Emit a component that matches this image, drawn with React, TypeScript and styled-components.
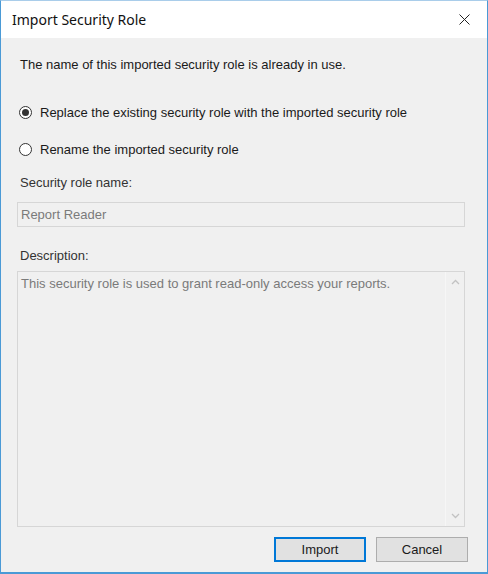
import styled, { createGlobalStyle } from 'styled-components';

const GlobalStyle = createGlobalStyle`
  html, body {
    margin: 0;
    padding: 0;
    background: #f0f0f0;
  }
  * {
    box-sizing: border-box;
  }
`;

const Window = styled.div`
  width: 488px;
  height: 574px;
  display: flex;
  flex-direction: column;
  border: 1px solid #4a9ad6;
  border-top-color: #a9cdea;
  border-bottom-width: 2px;
  background: #f0f0f0;
  font-family: 'Liberation Sans', Arial, sans-serif;
  font-size: 13px;
  color: #1a1a1a;
`;

const TitleBar = styled.div`
  height: 37px;
  flex-shrink: 0;
  display: flex;
  align-items: center;
  justify-content: space-between;
  background: #ffffff;
  padding-left: 11px;
`;

const Title = styled.span`
  font-family: 'Noto Sans', 'Open Sans', sans-serif;
  font-size: 14px;
  color: #111;
`;

const CloseButton = styled.button`
  width: 46px;
  height: 37px;
  border: none;
  background: transparent;
  display: flex;
  align-items: center;
  justify-content: center;
  padding: 0;
`;

const Body = styled.div`
  flex: 1;
  display: flex;
  flex-direction: column;
  padding: 0 22px 0 16px;
`;

const Text = styled.div<{ $top: number; $muted?: boolean }>`
  margin-top: ${(p) => p.$top}px;
  margin-left: 3px;
  line-height: 15px;
  color: ${(p) => (p.$muted ? '#333' : '#1a1a1a')};
`;

const RadioRow = styled.label<{ $top: number }>`
  margin-top: ${(p) => p.$top}px;
  display: flex;
  align-items: center;
  gap: 8px;
  height: 16px;
  padding-left: 2px;
`;

const RadioCircle = styled.span<{ $checked?: boolean }>`
  width: 13px;
  height: 13px;
  border-radius: 50%;
  border: 1px solid #333;
  background: #fff;
  display: flex;
  align-items: center;
  justify-content: center;

  &::after {
    content: '';
    width: 7px;
    height: 7px;
    border-radius: 50%;
    background: ${(p) => (p.$checked ? '#333' : 'transparent')};
  }
`;

const Field = styled.div<{ $top: number; $height: number }>`
  margin-top: ${(p) => p.$top}px;
  height: ${(p) => p.$height}px;
  border: 1px solid #d6d6d6;
  background: #f0f0f0;
  color: #7a7a7a;
  display: flex;
`;

const FieldText = styled.div`
  flex: 1;
  padding: 4px 3px;
  line-height: 15px;
`;

const ScrollBar = styled.div`
  width: 19px;
  display: flex;
  flex-direction: column;
  justify-content: space-between;
  align-items: center;
  padding: 7px 0;
  border-left: 1px solid #f6f6f6;
`;

const Footer = styled.div`
  margin-top: 10px;
  display: flex;
  justify-content: flex-end;
  gap: 10px;
  margin-right: -3px;
`;

const Button = styled.button<{ $primary?: boolean }>`
  width: 92px;
  height: 25px;
  background: #e1e1e1;
  border: ${(p) => (p.$primary ? '2px solid #0078d7' : '1px solid #adadad')};
  font-family: 'Liberation Sans', Arial, sans-serif;
  font-size: 13px;
  color: #1a1a1a;
  padding: 0;
`;

const Chevron = ({ up }: { up?: boolean }) => (
  <svg width="9" height="6" viewBox="0 0 9 6">
    <path
      d={up ? 'M1 5 L4.5 1.5 L8 5' : 'M1 1 L4.5 4.5 L8 1'}
      fill="none"
      stroke="#c2c2c2"
      strokeWidth="1.3"
    />
  </svg>
);

export default function App() {
  return (
    <>
      <GlobalStyle />
      <Window>
        <TitleBar>
          <Title>Import Security Role</Title>
          <CloseButton>
            <svg width="11" height="11" viewBox="0 0 11 11">
              <path d="M0.5 0.5 L10.5 10.5 M10.5 0.5 L0.5 10.5" stroke="#222" strokeWidth="1" />
            </svg>
          </CloseButton>
        </TitleBar>
        <Body>
          <Text $top={19}>The name of this imported security role is already in use.</Text>
          <RadioRow $top={32}>
            <RadioCircle $checked />
            Replace the existing security role with the imported security role
          </RadioRow>
          <RadioRow $top={21}>
            <RadioCircle />
            Rename the imported security role
          </RadioRow>
          <Text $top={18} $muted>Security role name:</Text>
          <Field $top={12} $height={25}>
            <FieldText>Report Reader</FieldText>
          </Field>
          <Text $top={21} $muted>Description:</Text>
          <Field $top={8} $height={256}>
            <FieldText>This security role is used to grant read-only access your reports.</FieldText>
            <ScrollBar>
              <Chevron up />
              <Chevron />
            </ScrollBar>
          </Field>
          <Footer>
            <Button $primary>Import</Button>
            <Button>Cancel</Button>
          </Footer>
        </Body>
      </Window>
    </>
  );
}
